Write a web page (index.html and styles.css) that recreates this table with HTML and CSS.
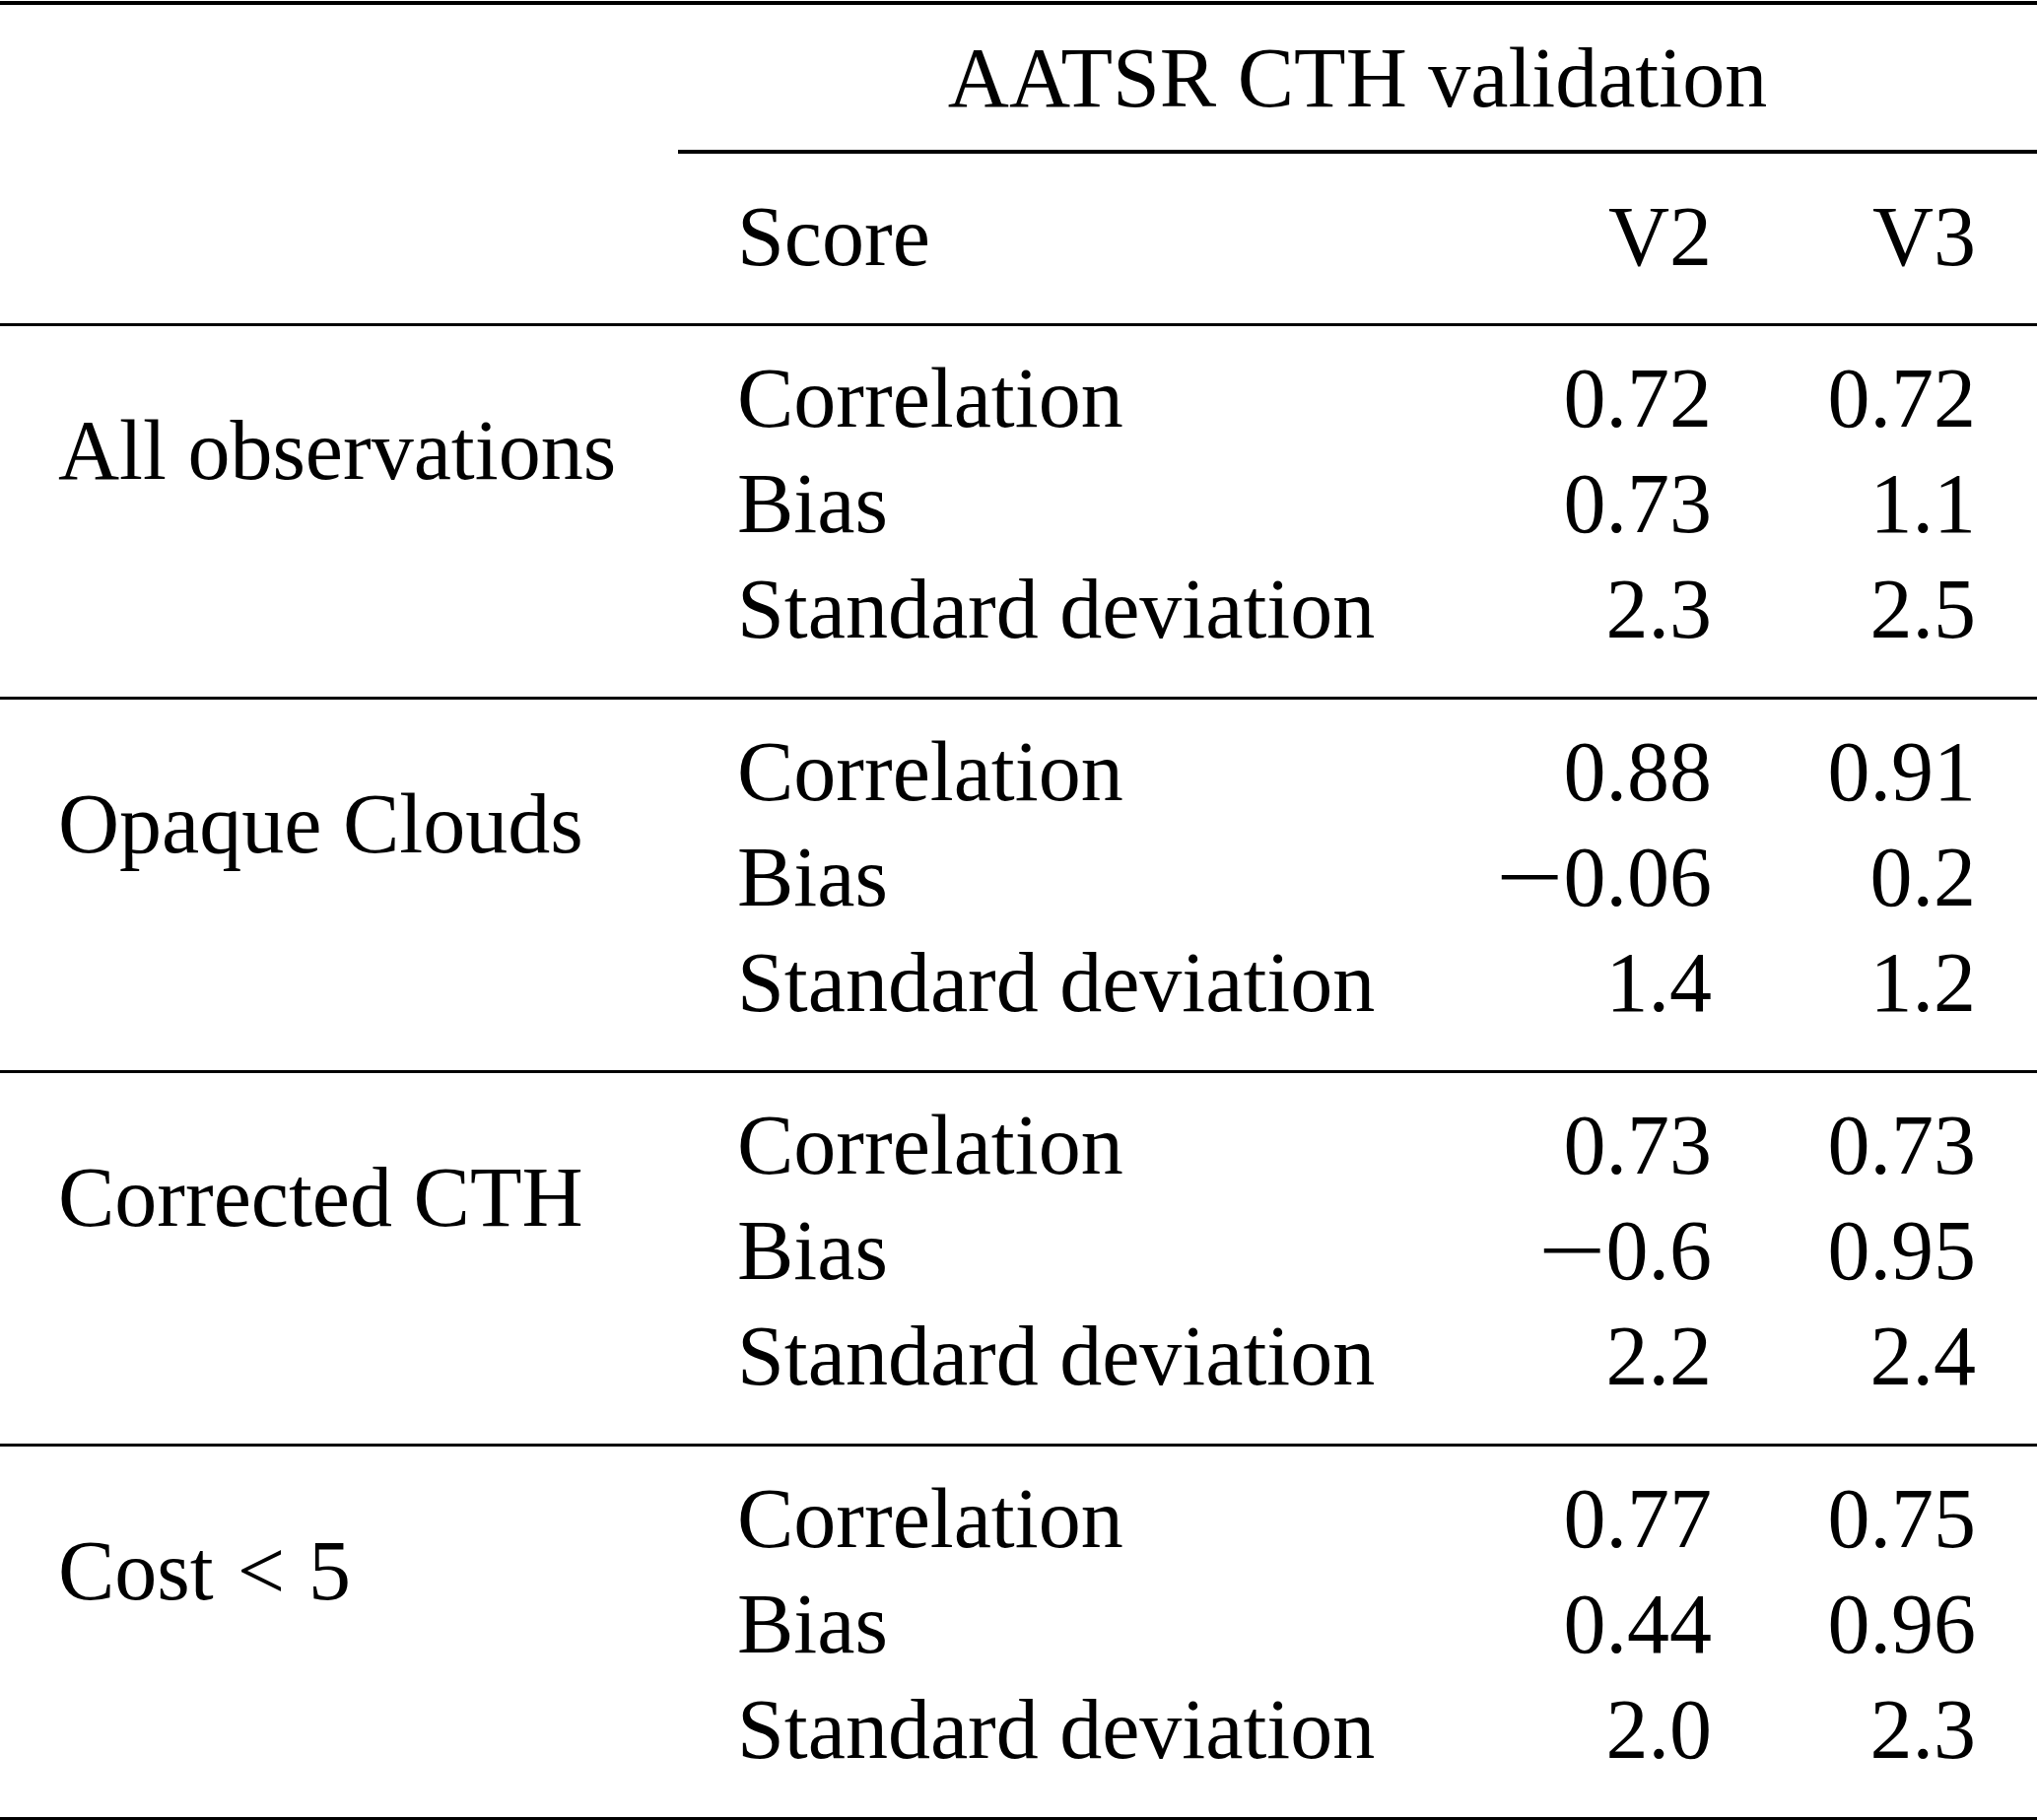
FILE: index.html
```html
<!DOCTYPE html>
<html lang="en">
<head>
<meta charset="utf-8">
<title>AATSR CTH validation</title>
<link rel="stylesheet" href="styles.css">
</head>
<body>
<table class="tbl">
  <colgroup>
    <col class="w1"><col class="w2"><col class="w3"><col class="w4">
  </colgroup>
  <thead>
    <tr class="h1">
      <td class="c1"></td>
      <th class="span" colspan="3">AATSR CTH validation</th>
    </tr>
    <tr class="h2">
      <td class="c1"></td>
      <th class="c2">Score</th>
      <th class="c3">V2</th>
      <th class="c4">V3</th>
    </tr>
  </thead>
  <tbody class="grp">
    <tr class="first">
      <td class="c1 lbl" rowspan="3">All observations</td>
      <td class="c2">Correlation</td><td class="c3">0.72</td><td class="c4">0.72</td>
    </tr>
    <tr><td class="c2">Bias</td><td class="c3">0.73</td><td class="c4">1.1</td></tr>
    <tr class="last"><td class="c2">Standard deviation</td><td class="c3">2.3</td><td class="c4">2.5</td></tr>
  </tbody>
  <tbody class="grp">
    <tr class="first">
      <td class="c1 lbl" rowspan="3">Opaque Clouds</td>
      <td class="c2">Correlation</td><td class="c3">0.88</td><td class="c4">0.91</td>
    </tr>
    <tr><td class="c2">Bias</td><td class="c3"><span class="neg">&minus;</span>0.06</td><td class="c4">0.2</td></tr>
    <tr class="last"><td class="c2">Standard deviation</td><td class="c3">1.4</td><td class="c4">1.2</td></tr>
  </tbody>
  <tbody class="grp">
    <tr class="first">
      <td class="c1 lbl" rowspan="3">Corrected CTH</td>
      <td class="c2">Correlation</td><td class="c3">0.73</td><td class="c4">0.73</td>
    </tr>
    <tr><td class="c2">Bias</td><td class="c3"><span class="neg">&minus;</span>0.6</td><td class="c4">0.95</td></tr>
    <tr class="last"><td class="c2">Standard deviation</td><td class="c3">2.2</td><td class="c4">2.4</td></tr>
  </tbody>
  <tbody class="grp final">
    <tr class="first">
      <td class="c1 lbl" rowspan="3">Cost<span class="rel">&lt;</span>5</td>
      <td class="c2">Correlation</td><td class="c3">0.77</td><td class="c4">0.75</td>
    </tr>
    <tr><td class="c2">Bias</td><td class="c3">0.44</td><td class="c4">0.96</td></tr>
    <tr class="last"><td class="c2">Standard deviation</td><td class="c3">2.0</td><td class="c4">2.3</td></tr>
  </tbody>
</table>
</body>
</html>
```
FILE: styles.css
```css
html, body {
  margin: 0;
  background: #ffffff;
}

body {
  padding-top: 1px;
  font-family: "Liberation Serif", "Times New Roman", serif;
  font-size: 86px;
  line-height: 107px;
  color: #000000;
}

.tbl {
  border-collapse: separate;
  border-spacing: 0;
  table-layout: fixed;
  width: 2067px;
}

.w1 { width: 688px; }
.w2 { width: 770px; }
.w3 { width: 339px; }
.w4 { width: 270px; }

.tbl td,
.tbl th {
  padding: 0;
  font-weight: normal;
  white-space: nowrap;
  vertical-align: top;
}

.tbl .c1 { padding-left: 59px; text-align: left; }
.tbl .c2 { padding-left: 60px; text-align: left; }
.tbl .c3 { padding-right: 60px; text-align: right; }
.tbl .c4 { padding-right: 62px; text-align: right; }

/* header row 1 */
.tbl .h1 td,
.tbl .h1 th {
  border-top: 4px solid #000;
  padding-top: 20.5px;
  padding-bottom: 19.5px;
}

.tbl .h1 .span {
  text-align: center;
  border-bottom: 4px solid #000;
}

/* header row 2 */
.tbl .h2 td,
.tbl .h2 th {
  padding-top: 30.5px;
  padding-bottom: 34.5px;
}

/* body groups */
.tbl .grp .first td {
  border-top: 3px solid #000;
  padding-top: 19.5px;
}

.tbl .grp .last td {
  padding-bottom: 35.5px;
}

.tbl .grp .first td.lbl {
  padding-top: 73px;
}

.tbl .final .last td,
.tbl .final td.lbl {
  border-bottom: 4px solid #000;
}

.rel {
  margin: 0 0.278em;
}

.neg {
  display: inline-block;
  transform: scaleX(1.42);
  transform-origin: 88% 50%;
  margin-right: 2px;
}
```
